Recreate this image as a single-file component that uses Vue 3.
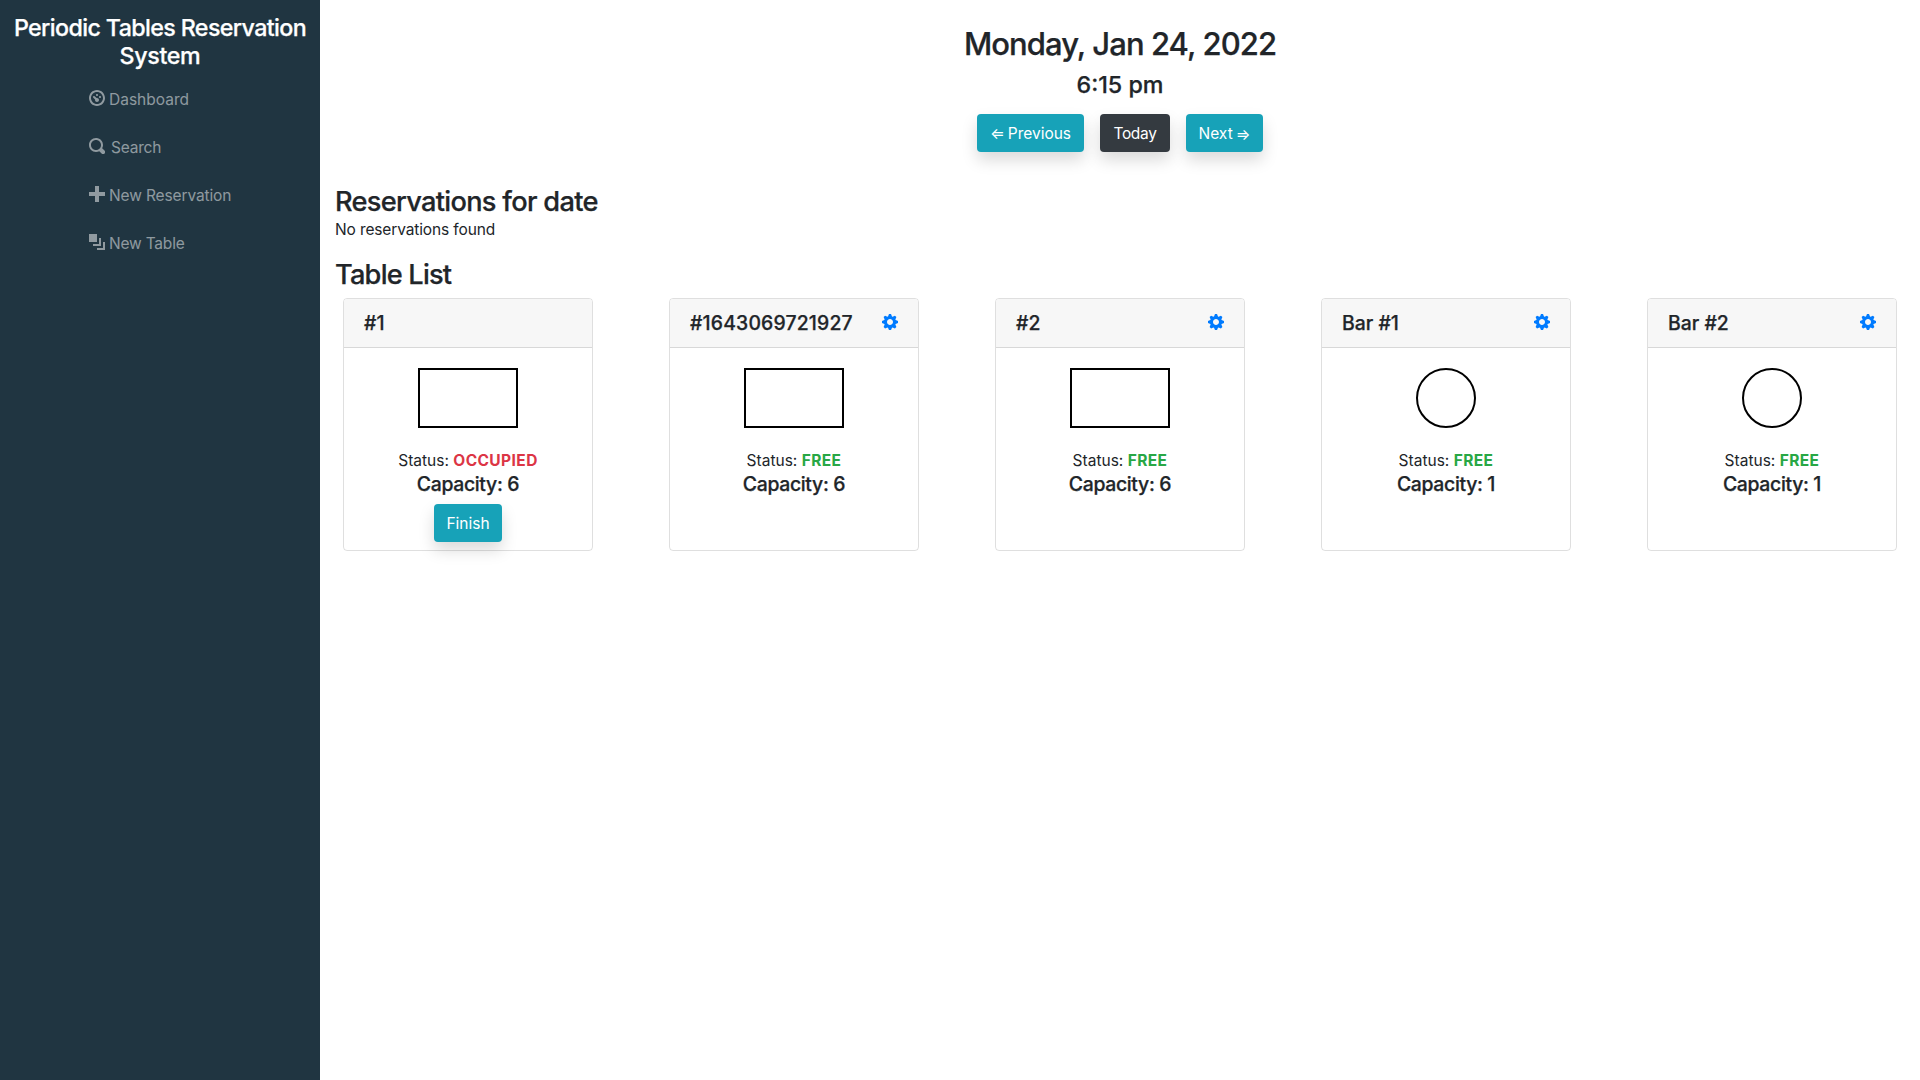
<script setup>
const nav = [
  { label: 'Dashboard', left: 4, spacing: 0, icon: 'M4 0c-2.2 0-4 1.8-4 4s1.8 4 4 4 4-1.8 4-4-1.8-4-4-4zm0 1c1.66 0 3 1.34 3 3s-1.34 3-3 3-3-1.34-3-3 1.34-3 3-3zm0 1c-.28 0-.5.22-.5.5s.22.5.5.5.5-.22.5-.5-.22-.5-.5-.5zm-1.66 1a.5.5 0 0 0-.19.84l.91.91c-.02.08-.06.16-.06.25 0 .55.45 1 1 1s1-.45 1-1-.45-1-1-1c-.09 0-.17.04-.25.06l-.91-.91a.5.5 0 0 0-.44-.16.5.5 0 0 0-.06 0zm3.16 0c-.28 0-.5.22-.5.5s.22.5.5.5.5-.22.5-.5-.22-.5-.5-.5z' },
  { label: 'Search', left: 6, spacing: -0.2, icon: 'M3.5 0c-1.93 0-3.5 1.57-3.5 3.5s1.57 3.5 3.5 3.5c.59 0 1.17-.14 1.66-.41a1 1 0 0 0 .13.13l1 1a1.02 1.02 0 1 0 1.44-1.44l-1-1a1 1 0 0 0-.16-.13c.27-.49.44-1.06.44-1.66 0-1.93-1.55-3.5-3.5-3.5zm0 1c1.39 0 2.5 1.11 2.5 2.5 0 .66-.24 1.27-.66 1.72-.01.01-.02.02-.03.03a1 1 0 0 0-.13.13c-.44.4-1.04.63-1.69.63-1.39 0-2.5-1.11-2.5-2.5s1.11-2.5 2.5-2.5z' },
  { label: 'New Reservation', left: 4, spacing: -0.13, icon: 'M3 0v3h-3v2h3v3h2v-3h3v-2h-3v-3h-2z' },
  { label: 'New Table', left: 4, spacing: -0.2, icon: 'M0 0v4h4v-4h-4zm5 2v3h-3v1h4v-4h-1zm2 2v3h-3v1h4v-4h-1z' },
]
const cog = 'M3.5 0l-.5 1.19c-.1.03-.19.08-.28.13l-1.19-.5-.72.72.5 1.19c-.05.1-.09.18-.13.28l-1.19.5v1l1.19.5c.04.1.08.18.13.28l-.5 1.19.72.72 1.19-.5c.09.04.18.09.28.13l.5 1.19h1l.5-1.19c.09-.04.19-.08.28-.13l1.19.5.72-.72-.5-1.19c.04-.09.09-.19.13-.28l1.19-.5v-1l-1.19-.5c-.03-.09-.08-.19-.13-.28l.5-1.19-.72-.72-1.19.5c-.09-.04-.19-.09-.28-.13l-.5-1.19h-1zm.5 2.5c.83 0 1.5.67 1.5 1.5s-.67 1.5-1.5 1.5-1.5-.67-1.5-1.5.67-1.5 1.5-1.5z'
const tables = [
  { name: '#1', capacity: 6, occupied: true },
  { name: '#1643069721927', capacity: 6, occupied: false },
  { name: '#2', capacity: 6, occupied: false },
  { name: 'Bar #1', capacity: 1, occupied: false },
  { name: 'Bar #2', capacity: 1, occupied: false },
]
</script>

<template>
  <div class="app">
    <aside class="sidebar">
      <h1 class="brand"><span class="brand-top">Periodic Tables Reservation</span> <span class="brand-bottom">System</span></h1>
      <nav class="nav">
        <a v-for="n in nav" :key="n.label" class="nav-link">
          <svg class="icon" viewBox="0 0 8 8"><path :d="n.icon" /></svg>
          <span class="nav-text" :style="{ marginLeft: n.left + 'px', letterSpacing: n.spacing + 'px' }">{{ n.label }}</span>
        </a>
      </nav>
    </aside>

    <main class="main">
      <header class="top">
        <h2 class="date">Monday, Jan 24, 2022</h2>
        <h4 class="time">6:15 pm</h4>
        <div class="buttons">
          <button class="btn info prev"><span class="arrow">⇐</span>Previous</button>
          <button class="btn dark today">Today</button>
          <button class="btn info next">Next<span class="arrow low">⇒</span></button>
        </div>
      </header>

      <h3 class="section">Reservations for date</h3>
      <p class="empty">No reservations found</p>
      <h3 class="section list">Table List</h3>

      <div class="cards">
        <article v-for="t in tables" :key="t.name" class="card">
          <div class="card-header">
            <h5 class="name" :class="{ long: t.name.length > 6 }">{{ t.name }}</h5>
            <svg v-if="!t.occupied" class="icon cog" viewBox="0 0 8 8"><path :d="cog" /></svg>
          </div>
          <div class="card-body">
            <div class="shape" :class="{ round: t.capacity === 1 }"></div>
            <p class="status">Status: <b :class="t.occupied ? 'occupied' : 'free'">{{ t.occupied ? 'OCCUPIED' : 'FREE' }}</b></p>
            <h5 class="capacity">Capacity: {{ t.capacity }}</h5>
            <button v-if="t.occupied" class="btn info finish">Finish</button>
          </div>
        </article>
      </div>
    </main>
  </div>
</template>

<style>
body { margin: 0; background: #fff; }
</style>

<style scoped>
* { box-sizing: border-box; }
h1, h2, h3, h4, h5, p { margin: 0; font-weight: 500; line-height: 1.2; }
h1, h2, h3, h4, h5 { -webkit-text-stroke: 0.25px currentColor; }
.app {
  display: flex;
  height: 1080px;
  overflow: hidden;
  font: 400 15.5px/24px Inter, "Liberation Sans", sans-serif;
  color: #212529;
}
.sidebar { width: 320px; background: #203541; padding-top: 14px; flex: none; }
.brand { color: #fff; font-size: 23.25px; line-height: 28px; text-align: center; white-space: nowrap; }
.brand span { display: block; }
.brand-top { letter-spacing: -0.62px; }
.brand-bottom { letter-spacing: -0.34px; }
.nav { display: flex; flex-direction: column; gap: 24px; padding: 17px 0 0 89px; color: rgba(255, 255, 255, 0.5); }
.nav-link { display: flex; align-items: center; height: 24px; }
.nav-text { padding-top: 2px; }
.icon { width: 16px; height: 16px; fill: currentColor; display: block; flex: none; }
.nav-link .icon { margin-bottom: 2px; }
.main { flex: 1; padding: 25px 15px 0; }
.top { display: flex; flex-direction: column; align-items: center; }
.date { font-size: 31px; line-height: 38.4px; letter-spacing: -0.93px; }
.time { margin-top: 8px; font-size: 23.25px; line-height: 28.8px; }
.buttons { display: flex; gap: 16px; margin-top: 13.8px; }
.btn {
  display: flex;
  align-items: center;
  justify-content: center;
  height: 38px;
  padding: 2px 0 0;
  border: 0;
  border-radius: 4px;
  color: #fff;
  font: 400 15.5px/24px Inter, "Liberation Sans", sans-serif;
  box-shadow: 0 8px 16px rgba(0, 0, 0, 0.15);
}
.info { background: #17a2b8; }
.dark { background: #343a40; }
.prev { width: 107px; }
.prev .arrow { margin-right: 3px; }
.today { width: 70px; letter-spacing: -0.32px; }
.next { width: 77px; }
.next .arrow { margin-left: 3px; }
.low { padding-top: 2px; }
.section { margin-top: 33px; font-size: 27.2px; line-height: 33px; letter-spacing: -0.7px; }
.empty { font-weight: 400; line-height: 24px; letter-spacing: -0.13px; }
.list { margin-top: 16px; letter-spacing: -0.79px; }
.cards { display: flex; justify-content: space-between; padding: 7px 8px 0; }
.card { width: 250px; height: 253px; border: 1px solid rgba(0, 0, 0, 0.125); border-radius: 4px; }
.card-header {
  display: flex;
  align-items: center;
  justify-content: space-between;
  height: 49px;
  padding: 0 20px;
  background: #f7f7f7;
  border-bottom: 1px solid rgba(0, 0, 0, 0.125);
  border-radius: 3px 3px 0 0;
}
.name { font-size: 19.4px; line-height: 24px; }
.long { letter-spacing: 0.17px; }
.cog { color: #007bff; margin-bottom: 2px; }
.card-body { display: flex; flex-direction: column; align-items: center; padding-top: 20px; }
.shape { width: 100px; height: 60px; border: 2px solid #000; }
.round { width: 60px; border-radius: 50%; }
.status { margin-top: 21px; font-weight: 400; line-height: 24px; }
.status b { font-weight: 700; letter-spacing: 0.4px; }
.occupied { color: #dc3545; }
.free { color: #28a745; }
.capacity { margin-top: -1px; font-size: 19.4px; line-height: 24px; letter-spacing: -0.32px; }
.finish { width: 68px; margin-top: 8px; }
</style>
